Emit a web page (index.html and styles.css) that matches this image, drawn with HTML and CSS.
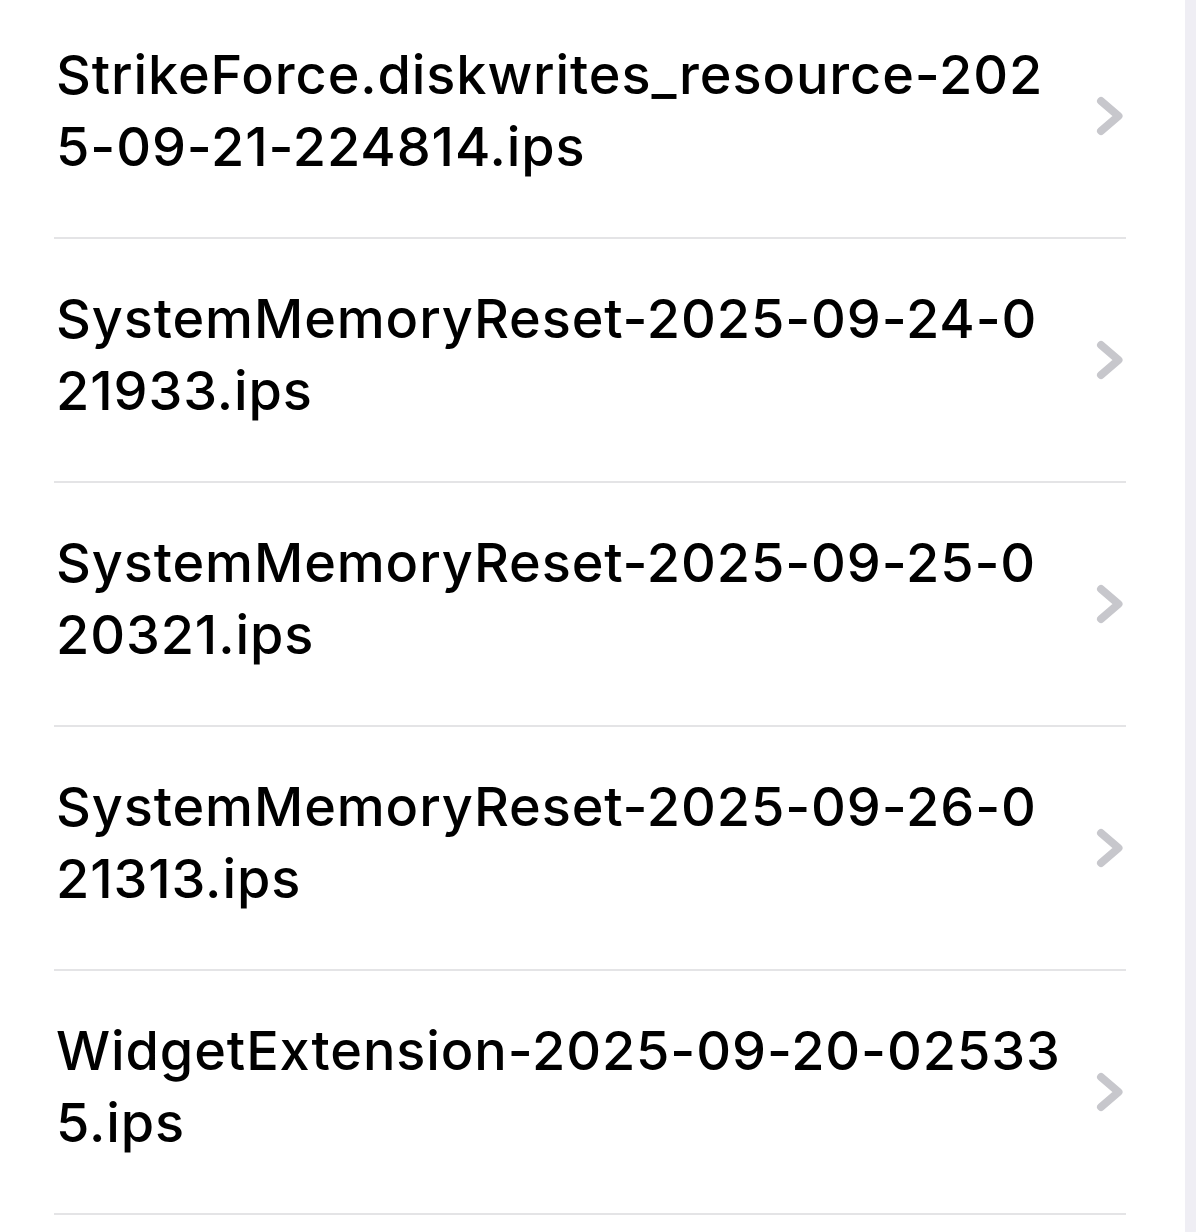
FILE: index.html
```html
<!DOCTYPE html>
<html lang="en">
<head>
<meta charset="utf-8">
<title>Logs</title>
<link rel="stylesheet" href="styles.css">
</head>
<body>
<main class="card">
  <ul class="list">
    <li class="item">
      <span class="name">StrikeForce.diskwrites_resource-202<br>5-09-21-224814.ips</span>
      <svg class="chev" viewBox="0 0 28 40" width="28" height="40" aria-hidden="true"><path d="M5 5 L22.5 20 L5 35" fill="none" stroke="#c7c7cc" stroke-width="8" stroke-linecap="round" stroke-linejoin="round"/></svg>
    </li>
    <li class="item">
      <span class="name">SystemMemoryReset-2025-09-24-0<br>21933.ips</span>
      <svg class="chev" viewBox="0 0 28 40" width="28" height="40" aria-hidden="true"><path d="M5 5 L22.5 20 L5 35" fill="none" stroke="#c7c7cc" stroke-width="8" stroke-linecap="round" stroke-linejoin="round"/></svg>
    </li>
    <li class="item">
      <span class="name">SystemMemoryReset-2025-09-25-0<br>20321.ips</span>
      <svg class="chev" viewBox="0 0 28 40" width="28" height="40" aria-hidden="true"><path d="M5 5 L22.5 20 L5 35" fill="none" stroke="#c7c7cc" stroke-width="8" stroke-linecap="round" stroke-linejoin="round"/></svg>
    </li>
    <li class="item">
      <span class="name">SystemMemoryReset-2025-09-26-0<br>21313.ips</span>
      <svg class="chev" viewBox="0 0 28 40" width="28" height="40" aria-hidden="true"><path d="M5 5 L22.5 20 L5 35" fill="none" stroke="#c7c7cc" stroke-width="8" stroke-linecap="round" stroke-linejoin="round"/></svg>
    </li>
    <li class="item">
      <span class="name">WidgetExtension-2025-09-20-02533<br>5.ips</span>
      <svg class="chev" viewBox="0 0 28 40" width="28" height="40" aria-hidden="true"><path d="M5 5 L22.5 20 L5 35" fill="none" stroke="#c7c7cc" stroke-width="8" stroke-linecap="round" stroke-linejoin="round"/></svg>
    </li>
  </ul>
</main>
</body>
</html>
```
FILE: styles.css
```css
html, body {
  margin: 0;
  padding: 0;
  background: #efeef4;
}
body {
  font-family: Inter, "Noto Sans", "Liberation Sans", sans-serif;
  color: #000;
}
.card {
  width: 1185px;
  min-height: 100vh;
  background: #ffffff;
  overflow: hidden;
}
.list {
  list-style: none;
  margin: -5px 0 0 0;
  padding: 0;
}
.item {
  display: flex;
  align-items: center;
  height: 242px;
  margin: 0 59px 0 54px;
  border-bottom: 2px solid #e4e4e6;
}
.name {
  flex: 1;
  padding-left: 2px;
  padding-bottom: 10px;
  font-size: 54px;
  line-height: 72px;
  font-weight: 500;
  letter-spacing: 0.9px;
  white-space: nowrap;
}
.chev {
  flex: none;
  margin-right: 2px;
}
```
